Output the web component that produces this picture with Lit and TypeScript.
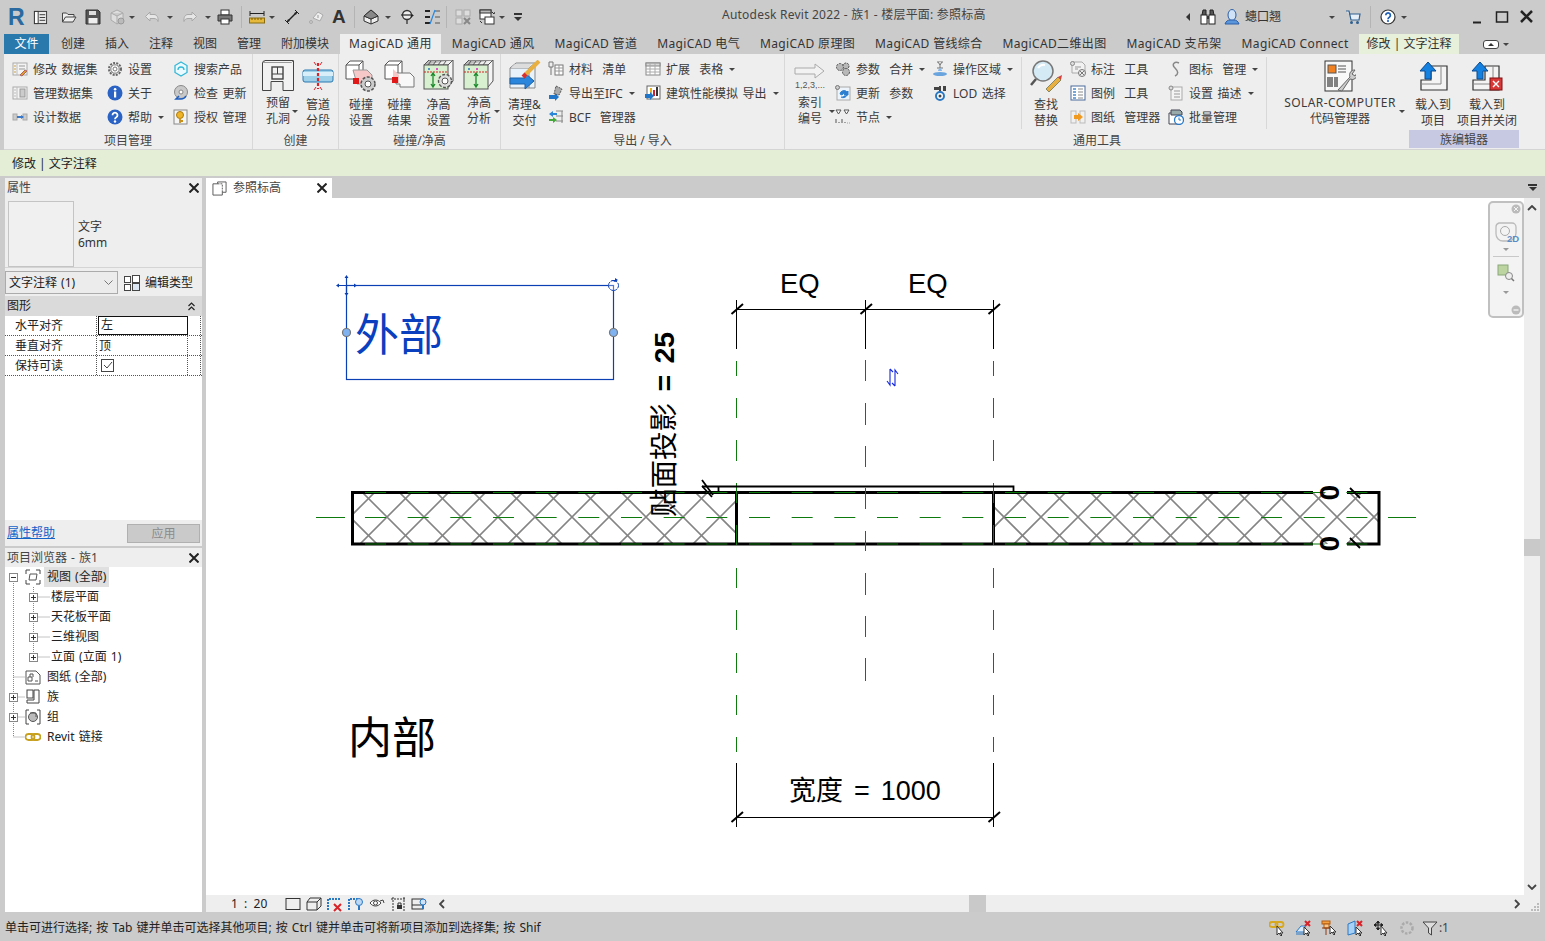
import { LitElement, css, html, svg, SVGTemplateResult } from 'lit';
import { customElement } from 'lit/decorators.js';

const G = { red: '#d8232a' };

// 16px icons, used in the quick access bar, small ribbon rows and the tree
const I16: Record<string, SVGTemplateResult> = {
  doc: svg`<rect x="1.500" y="1.500" width="13" height="13" fill="#e8e8e8" stroke="#333"/><rect x="1.500" y="1.500" width="4" height="13" fill="#fff" stroke="#333"/><path d="M7 5h6M7 8h6M7 11h6" stroke="#333"/>`,
  open: svg`<path d="M1.500 13V4h4l1.500 1.500h6V8M1.500 13l3-5h10.500l-3 5z" fill="#eee" stroke="#444"/>`,
  save: svg`<path d="M1 1h12l2 2v12H1z" fill="#555" stroke="#333"/><rect x="4" y="2" width="7" height="4" fill="#ddd"/><rect x="3.500" y="9" width="9" height="5.500" fill="#eee"/>`,
  cubeg: svg`<path d="M2 4l6-3 6 3v7l-6 4-6-4zM2 4l6 3 6-3M8 7v8" fill="#ddd" stroke="#aaa"/><circle cx="12" cy="12" r="3" fill="#bbb" stroke="#999"/>`,
  undo: svg`<path d="M6 3L1.500 7.500 6 12V9.500h4c2 0 3.500 1 4 3 .5-4-1-7-4-7H6z" fill="#e6e6e6" stroke="#a8a8a8"/>`,
  redo: svg`<path d="M10 3l4.500 4.500L10 12V9.500H6c-2 0-3.500 1-4 3-.5-4 1-7 4-7h4z" fill="#e6e6e6" stroke="#a8a8a8"/>`,
  print: svg`<rect x="4" y="1" width="8" height="5" fill="#fff" stroke="#333"/><path d="M1 6h14v6H1z" fill="#777" stroke="#333"/><rect x="4" y="10" width="8" height="5" fill="#fff" stroke="#333"/>`,
  measure: svg`<path d="M1 4.500h14M1 2v5M15 2v5" stroke="#222" fill="none"/><rect x="0.500" y="9" width="15" height="5" fill="#e6b93c" stroke="#8a6d10"/><path d="M3 9v2M6 9v2M9 9v2M12 9v2" stroke="#7a5c00"/>`,
  aligned: svg`<path d="M3 13L13 3" stroke="#222" stroke-width="1.400"/><path d="M1 11l4 4M11 1l4 4" stroke="#222"/><path d="M3 13l1-3 2 2zM13 3l-1 3-2-2z" fill="#222"/>`,
  tagg: svg`<path d="M5 9l5-6 5 3-3 6z" fill="#eee" stroke="#aaa"/><circle cx="3" cy="13" r="1.500" fill="none" stroke="#aaa"/><path d="M10 6v3" stroke="#999"/>`,
  home: svg`<path d="M1 7l7-6 7 6v5l-7 3-7-3z" fill="#eee" stroke="#333"/><path d="M1 7l7 3 7-3M8 10v5" stroke="#333" fill="none"/><path d="M1 7l7-6 7 6-7 3z" fill="#888" stroke="#333"/>`,
  section: svg`<circle cx="7" cy="6" r="4.500" fill="#eee" stroke="#333" stroke-width="1.300"/><path d="M1 6h12" stroke="#333" stroke-width="1.300"/><path d="M7 11v4" stroke="#333" stroke-width="1.300"/><path d="M11 6l3 0-3 3z" fill="#222"/>`,
  thin: svg`<path d="M1 2h5M1 8h5M1 14h5" stroke="#222" stroke-width="2"/><path d="M11 2h5M11 8h5M11 14h5" stroke="#555"/><path d="M11 1L6 15" stroke="#2a88e0" stroke-width="1.200"/>`,
  closeg: svg`<rect x="1" y="1" width="6" height="6" fill="#ddd" stroke="#aaa"/><rect x="9" y="1" width="6" height="6" fill="#ddd" stroke="#aaa"/><rect x="1" y="9" width="6" height="6" fill="#ddd" stroke="#aaa"/><path d="M9 9l6 6M15 9l-6 6" stroke="#888" stroke-width="2"/>`,
  switchw: svg`<rect x="1" y="1" width="11" height="9" fill="#fff" stroke="#333"/><rect x="1" y="1" width="11" height="3" fill="#bbb" stroke="#333"/><rect x="6" y="8" width="9" height="7" fill="#fff" stroke="#333"/><path d="M13 3l2 2 1-2M1 12l2 2" stroke="#333" fill="none"/>`,
  dsEdit: svg`<rect x="1" y="2" width="14" height="12" fill="#f4f4f4" stroke="#aaa"/><path d="M5 2v12" stroke="#bbb"/><path d="M2 5h2M2 8h2M2 11h2" stroke="#c8a040"/><path d="M7 5h6M7 8h6" stroke="#999"/><path d="M8 14l5-5 2 1-5 5z" fill="#e69a2a" stroke="#a66"/>`,
  ds: svg`<rect x="1" y="2" width="14" height="12" fill="#f4f4f4" stroke="#aaa"/><path d="M5 2v12" stroke="#bbb"/><rect x="8" y="4" width="5" height="8" fill="#ccc" stroke="#999"/><path d="M2 5h2M2 8h2M2 11h2" stroke="#bbb"/>`,
  design: svg`<rect x="1" y="5" width="4" height="6" fill="#ccc" stroke="#aaa"/><rect x="11" y="5" width="4" height="6" fill="#ccc" stroke="#aaa"/><path d="M5 8h6" stroke="#3a78c8" stroke-width="2"/><path d="M9 6l3 2-3 2z" fill="#3a78c8"/>`,
  gear: svg`<circle cx="8" cy="8" r="6" fill="none" stroke="#666" stroke-width="2" stroke-dasharray="2 1.200"/><circle cx="8" cy="8" r="4.200" fill="#fff" stroke="#777"/><circle cx="8" cy="8" r="2" fill="#fff" stroke="#777"/>`,
  hex: svg`<path d="M8 1l6 3.500v7L8 15l-6-3.500v-7z" fill="#eafaff" stroke="#35b7d6" stroke-width="1.300"/><path d="M5 9a3 3 0 0 1 6 0" fill="none" stroke="#35b7d6" stroke-width="1.300"/>`,
  info: svg`<circle cx="8" cy="8" r="7.500" fill="#2b63c4"/><rect x="7" y="6.500" width="2.200" height="6" fill="#fff"/><circle cx="8.100" cy="4.200" r="1.300" fill="#fff"/>`,
  help: svg`<circle cx="8" cy="8" r="7.500" fill="#2b63c4"/><path d="M5.500 6.200a2.500 2.500 0 1 1 3.800 2.100c-.9.5-1.300 1-1.300 2" fill="none" stroke="#fff" stroke-width="1.800"/><circle cx="8" cy="12.500" r="1.200" fill="#fff"/>`,
  disc: svg`<circle cx="8" cy="7" r="6.500" fill="#c9c9c9" stroke="#888"/><circle cx="8" cy="7" r="2" fill="#fff" stroke="#888"/><path d="M6 11l-3 3h5M8 14c2 0 4-1 5-3" stroke="#1f5fc0" stroke-width="1.600" fill="none"/>`,
  key: svg`<rect x="1" y="1" width="13" height="14" fill="#f5f5f5" stroke="#888"/><circle cx="7" cy="6" r="3.500" fill="#f0b428" stroke="#a87a10"/><path d="M7 9v5M7 12h3" stroke="#c8901a" stroke-width="1.800"/>`,
  material: svg`<path d="M1 1h4v5H1zM3 6v8" fill="none" stroke="#777"/><rect x="7" y="4" width="8" height="10" fill="#fff" stroke="#777"/><path d="M7 7h8M7 10h8M11 4v10" stroke="#999"/>`,
  table: svg`<rect x="1" y="2" width="14" height="12" fill="#fff" stroke="#888"/><rect x="1" y="2" width="14" height="3" fill="#d8d8d8" stroke="#888"/><path d="M1 8h14M1 11h14M5 2v12M10 2v12" stroke="#aaa"/>`,
  ifc: svg`<path d="M8 1l6 3-3 6-5-1z" fill="#aaa" stroke="#555" stroke-dasharray="2 1"/><path d="M1 10h6V8l4 4-4 4v-2H1z" fill="#1f76c8"/>`,
  energy: svg`<rect x="2" y="1" width="13" height="13" fill="#fff" stroke="#666"/><rect x="5" y="3" width="2" height="8" fill="#e6b020"/><rect x="8" y="5" width="2" height="6" fill="#c23"/><rect x="11" y="2" width="2" height="9" fill="#333"/><path d="M0 9h5V7l4 4-4 4v-2H0z" fill="#1f76c8"/>`,
  bcf: svg`<path d="M8 2h7M8 7h7M8 12h7M14 2v12" stroke="#888" fill="none"/><path d="M1 5l4-3v2h4v2H5v2z" fill="#2a86d8"/><path d="M9 11l-4-3v2H1v2h4v2z" fill="#45a83c"/>`,
  params: svg`<circle cx="5" cy="6" r="3.500" fill="#b8b8b8" stroke="#555" stroke-dasharray="2 1"/><circle cx="11" cy="5" r="3" fill="#b8b8b8" stroke="#555" stroke-dasharray="2 1"/><circle cx="11" cy="11" r="3.500" fill="#b8b8b8" stroke="#555" stroke-dasharray="2 1"/>`,
  updParam: svg`<rect x="2" y="2" width="13" height="13" fill="#eef4fb" stroke="#aaa"/><circle cx="2.500" cy="2.500" r="2" fill="#ccc" stroke="#777"/><path d="M5 9a4 4 0 0 1 7-2l1-1v4H9l1-1a2 2 0 0 0-3 1zM12 10a4 4 0 0 1-6 2" fill="#2c7fd0" stroke="#2c7fd0"/>`,
  nodes: svg`<path d="M1 1h5L3.500 5zM9 1h5l-2.500 4z" fill="#fff" stroke="#555"/><path d="M1 10v4M4 13v1M7 10v4M10 13v1M12.500 14h.5M14.500 14h.5" stroke="#555"/>`,
  opArea: svg`<path d="M5 1h6M5 7h6M8 1v6" stroke="#777"/><path d="M6 1l2 3 2-3" fill="#ddd" stroke="#777"/><path d="M8 7c-1 0-2 2-2 3h4c0-1-1-3-2-3z" fill="#88b8e8"/><ellipse cx="8" cy="13" rx="7" ry="2" fill="#6aa4de"/>`,
  lod: svg`<path d="M8 7V1" stroke="#444" stroke-width="2"/><rect x="2" y="2" width="5" height="3" fill="#444"/><rect x="11" y="1" width="3" height="5" fill="#444"/><circle cx="8" cy="11" r="4" fill="#fff" stroke="#2a78c4" stroke-width="2"/><circle cx="8" cy="11" r="1.500" fill="#444"/>`,
  tagTool: svg`<path d="M2 1h10l3 3v8H2z" fill="#f2f2f2" stroke="#aaa"/><circle cx="2.500" cy="2.500" r="2" fill="#ddd" stroke="#888"/><path d="M5 6h6M5 8h3" stroke="#999"/><circle cx="12" cy="12" r="3.500" fill="#eee" stroke="#777"/><path d="M10 10l4 4M14 10l-4 4" stroke="#777"/>`,
  legend: svg`<rect x="1" y="1" width="14" height="14" fill="#fff" stroke="#4a6a9a"/><path d="M3 4h3M3 7h3M3 10h3M3 13h3" stroke="#4a8ad0" stroke-width="1.400"/><path d="M8 4h5M8 7h5M8 10h5M8 13h5" stroke="#888"/>`,
  sheets: svg`<rect x="1" y="2" width="5" height="12" fill="#f0f0f0" stroke="#bbb"/><rect x="10" y="2" width="5" height="12" fill="#f0f0f0" stroke="#bbb"/><path d="M4 6h4V4l5 4-5 4v-2H4z" fill="#f09a20"/>`,
  iconS: svg`<path d="M11 2C7 0 3 3 7 7c3 3 4 6 0 8" fill="none" stroke="#888" stroke-width="1.500"/>`,
  desc: svg`<rect x="3" y="2" width="11" height="13" fill="#f4f4f4" stroke="#aaa"/><circle cx="3" cy="3" r="2" fill="#ddd" stroke="#888"/><path d="M6 6h6M6 9h6M6 12h6" stroke="#999"/>`,
  batch: svg`<path d="M1 4h11v11H1z" fill="#fff" stroke="#445"/><path d="M3 1h9l2 2v3H3z" fill="#9aa" stroke="#445"/><circle cx="11" cy="11" r="4.500" fill="#fff" stroke="#2a7ac8" stroke-width="1.300"/><path d="M11 8.500V11h2" stroke="#2a7ac8" fill="none"/>`,
  views: svg`<path d="M1 5V1h4M11 1h4v4M15 11v4h-4M5 15H1v-4" fill="none" stroke="#444"/><path d="M4 11l1-6h7l-1 6z" fill="#fff" stroke="#555"/>`,
  sheet: svg`<path d="M1 2h10l4 4v9H1z" fill="#fff" stroke="#555"/><path d="M3 12V8h4v4zM5 8V5h3v3M10 12h3" fill="none" stroke="#555"/>`,
  family: svg`<rect x="2" y="1" width="6" height="8" fill="#fff" stroke="#444"/><path d="M9 1h5v13H2v-3h7z" fill="#fff" stroke="#444"/>`,
  group: svg`<path d="M4 1H1v14h3M12 1h3v14h-3" fill="none" stroke="#444"/><circle cx="8" cy="8" r="4.500" fill="#bbb" stroke="#555"/><path d="M5 4h6v4" fill="none" stroke="#555"/>`,
  link: svg`<rect x="0.500" y="5" width="9" height="6" rx="3" fill="none" stroke="#c8a020" stroke-width="1.800"/><rect x="6.500" y="5" width="9" height="6" rx="3" fill="none" stroke="#c8a020" stroke-width="1.800"/>`,
  tabView: svg`<path d="M1 3h5V1h9v11h-4v3H1z" fill="#fff" stroke="#555"/><path d="M6 3h5v9" fill="none" stroke="#555" stroke-dasharray="2 1"/>`,
  binoc: svg`<path d="M2 6l1-5h3v5M14 6l-1-5h-3v5" fill="#555" stroke="#222"/><rect x="1" y="6" width="6" height="9" fill="#fff" stroke="#222"/><rect x="9" y="6" width="6" height="9" fill="#fff" stroke="#222"/><path d="M7 7h2v3H7z" fill="#333"/>`,
  user: svg`<ellipse cx="8" cy="6" rx="4" ry="5.500" fill="#cfe2f8" stroke="#2c5fa8"/><path d="M1 15c1-3 3-4 5-4h4c2 0 4 1 5 4z" fill="#5a96dc" stroke="#2c5fa8"/>`,
  cart: svg`<path d="M1 2h3l2 9h8l1-6H4" fill="#e6eef7" stroke="#30608f" stroke-width="1.200"/><circle cx="6.500" cy="13.500" r="1.500" fill="#30608f"/><circle cx="12.500" cy="13.500" r="1.500" fill="#30608f"/>`,
  helpO: svg`<circle cx="8" cy="8" r="7" fill="#fff" stroke="#333" stroke-width="1.200"/><path d="M5.800 6.200a2.300 2.300 0 1 1 3.500 2c-.9.500-1.300 1-1.300 2" fill="none" stroke="#1f5fb8" stroke-width="1.700"/><circle cx="8" cy="12" r="1.100" fill="#1f5fb8"/>`,
  vFrame: svg`<rect x="1" y="2.500" width="14" height="11" fill="#eee" stroke="#333"/>`,
  vCube: svg`<path d="M1 6h10v8H1zM1 6l3-4h11l-4 4M15 2v8l-4 4" fill="#eee" stroke="#333"/>`,
  vHideX: svg`<path d="M1 14V3h12" fill="none" stroke="#2a78c4" stroke-width="2" stroke-dasharray="2 1"/><path d="M7 8l7 7M14 8l-7 7" stroke="${G.red}" stroke-width="2"/>`,
  vBulb: svg`<path d="M1 14V3h10" fill="none" stroke="#2a78c4" stroke-width="2" stroke-dasharray="2 1"/><circle cx="11" cy="6" r="3.500" fill="#bcd8f4" stroke="#2a78c4"/><path d="M10 10h2v4h-2z" fill="#2a78c4"/>`,
  vEye: svg`<path d="M1 7c3-4 8-4 11 0-3 4-8 4-11 0z" fill="#fff" stroke="#444"/><circle cx="6.500" cy="7" r="2" fill="#fff" stroke="#444"/><path d="M11 5l3-1 1 3" fill="none" stroke="#444"/>`,
  vCrop: svg`<path d="M3 1v14M14 1v14M1 3h15" stroke="#333" stroke-dasharray="2 1" fill="none"/><rect x="7" y="9" width="5" height="4" fill="#333"/><path d="M8 9V7h3v2" fill="none" stroke="#333"/>`,
  vTemp: svg`<rect x="1" y="3" width="11" height="10" fill="#eee" stroke="#333"/><path d="M1 9h11" stroke="#333"/><circle cx="12" cy="6" r="3" fill="#cfe2f8" stroke="#2a78c4"/><path d="M11 9h2v4h-2z" fill="#2a78c4"/>`,
  sLink: svg`<rect x="0.500" y="2" width="8" height="5" rx="2.500" fill="none" stroke="#d8a81c" stroke-width="1.800"/><rect x="6.500" y="2" width="8" height="5" rx="2.500" fill="none" stroke="#d8a81c" stroke-width="1.800"/><path d="M8 6v9l2-2 2 3 1-1-2-2h3z" fill="#fff" stroke="#333"/>`,
  sUnder: svg`<path d="M1 12l5-6h4v6zM1 14h8" fill="#dbeafa" stroke="#2a78c4"/><path d="M10 1l5 5M15 1l-5 5" stroke="${G.red}" stroke-width="2"/><path d="M9 7v8l2-2 2 3 1-1-2-2h3z" fill="#fff" stroke="#333"/>`,
  sPin: svg`<rect x="1" y="1" width="8" height="3" fill="#f5a040" stroke="#b05a10"/><rect x="3" y="4" width="5" height="4" fill="#f7c890" stroke="#b05a10"/><path d="M1 8h9M5 8v7" stroke="#8a3a10"/><path d="M9 6v8l2-2 2 3 1-1-2-2h3z" fill="#fff" stroke="#333"/>`,
  sFace: svg`<path d="M1 4l7-3v12l-7 2z" fill="#a8d0f4" stroke="#2a78c4"/><path d="M10 1l5 5M15 1l-5 5" stroke="${G.red}" stroke-width="2"/><path d="M9 7v8l2-2 2 3 1-1-2-2h3z" fill="#fff" stroke="#333"/>`,
  sDrag: svg`<path d="M5 1v9M1 5h9M5 1L3.500 3h3zM5 10L3.500 8h3zM1 5l2-1.500v3zM10 5L8 3.500v3z" fill="#222" stroke="#222"/><path d="M8 6v9l2-2 2 3 1-1-2-2h3z" fill="#fff" stroke="#333"/>`,
  sCog: svg`<circle cx="8" cy="8" r="5.500" fill="none" stroke="#aaa" stroke-width="2.500" stroke-dasharray="2.500 1.500"/>`,
  sFilter: svg`<path d="M1 2h14L9.500 8v7l-3-2V8z" fill="#ddd" stroke="#444"/>`,
};

// 32px ribbon icons
const I32: Record<string, SVGTemplateResult> = {
  opening: svg`<path d="M0.500 2l2-1.500h29v30H21v-9H9v9H0.500z" fill="#f2f2f2" stroke="#444"/><path d="M2.500 0.500v2M31.500 0.500l-2 2H.5" fill="none" stroke="#999"/><rect x="10" y="7" width="11" height="12" fill="none" stroke="#444" stroke-width="1.400"/><path d="M10 14h11M15.500 7v7" stroke="#444"/>`,
  pipe: svg`<rect x="1" y="10" width="30" height="12" rx="2" fill="#9fd0ea" stroke="#2a78b0"/><rect x="1" y="12" width="30" height="4" fill="#d8eef8"/><path d="M16 3v26" stroke="${G.red}" stroke-width="2.200" stroke-dasharray="3 2"/><path d="M12 2l2 3M20 2l-2 3M12 30l2-3M20 30l-2-3" stroke="${G.red}"/>`,
  collSet: svg`<path d="M1 5l4-4h13v14l-4 4H1z" fill="#fff" stroke="#555"/><path d="M14 5v14M1 5h13l4-4" fill="none" stroke="#555"/><path d="M8 10h14l5 5v9H12z" fill="#f7c8c8" stroke="#999"/><rect x="8" y="18" width="6" height="6" fill="#e01818"/><circle cx="23" cy="24" r="7" fill="#ccc" stroke="#555" stroke-width="1.500" stroke-dasharray="3 1.500"/><circle cx="23" cy="24" r="3" fill="#fff" stroke="#555"/>`,
  collRes: svg`<path d="M1 5l4-4h13v14l-4 4H1z" fill="#fff" stroke="#555"/><path d="M14 5v14M1 5h13l4-4" fill="none" stroke="#555"/><path d="M12 13h14l4 4v10H16v-3h-4z" fill="#f8f8f8" stroke="#777"/><path d="M9 9l6 6v8H9z" fill="#f7c8c8"/><rect x="8" y="17" width="6" height="6" fill="#e01818"/>`,
  clearSet: svg`<path d="M1 5h24l5-5v21l-5 6" fill="#f4f4f4" stroke="#555"/><path d="M1 5l5-5h24" fill="#bbb" stroke="#555"/><path d="M8 1l-3 4M13 1l-3 4M18 1l-3 4M23 1l-3 4" stroke="#555"/><rect x="1" y="5" width="24" height="24" fill="#d8f0d0" stroke="#555"/><path d="M1 12h24" stroke="#d82020" stroke-dasharray="2 1"/><circle cx="6" cy="9" r="1" fill="#2a78c4"/><circle cx="14" cy="9" r="1" fill="#e020c0"/><path d="M10 14v12M8 16l2-3 2 3M8 24l2 3 2-3" stroke="#1a8a2a" fill="none" stroke-width="1.300"/><circle cx="22" cy="21" r="6.500" fill="#ddd" stroke="#555" stroke-dasharray="3 1.500" stroke-width="1.400"/><circle cx="22" cy="21" r="3" fill="#fff" stroke="#555"/>`,
  clearAna: svg`<path d="M1 5h24l5-5v21l-5 6" fill="#f4f4f4" stroke="#555"/><path d="M1 5l5-5h24" fill="#bbb" stroke="#555"/><path d="M8 1l-3 4M13 1l-3 4M18 1l-3 4M23 1l-3 4" stroke="#555"/><rect x="1" y="5" width="24" height="24" fill="#d8f0d0" stroke="#555"/><path d="M1 12h24" stroke="#d82020" stroke-dasharray="2 1"/><circle cx="6" cy="9" r="1" fill="#2a78c4"/><circle cx="14" cy="9" r="1" fill="#e020c0"/><path d="M13 14v12M11 16l2-3 2 3M11 24l2 3 2-3" stroke="#1a8a2a" fill="none" stroke-width="1.300"/>`,
  clean: svg`<path d="M1 8l6-5h19v25H1z" fill="#e8f2fa" stroke="#888"/><path d="M1 8h19l6-5M20 8v20" fill="none" stroke="#888"/><path d="M6 4h16L20 8H2z" fill="#ddd"/><path d="M1 18h15v-5l9 8-9 8v-5H1z" fill="#2a86dc" stroke="#1a60a8"/><path d="M16 15L30 1" stroke="#e8b040" stroke-width="4"/><path d="M14 17l3-3" stroke="#d83030" stroke-width="4"/>`,
  index: svg`<path d="M1 8h20V4l9 7-9 7v-4H1z" fill="#f2f2f2" stroke="#aaa"/><text x="1" y="28" font-size="9" font-family="Liberation Sans" fill="#555">1,2,3,...</text>`,
  find: svg`<circle cx="13" cy="11" r="10" fill="#d4eaf5" stroke="#777" stroke-width="1.500"/><path d="M8 8a7 7 0 0 1 7-3" stroke="#fff" stroke-width="2" fill="none"/><path d="M6 19L1 25" stroke="#555" stroke-width="2.500"/><path d="M16 29l12-12 3 3-12 12z" fill="#e8b040" stroke="#886"/><path d="M28 17l3 3 1-5z" fill="#d84040"/>`,
  solar: svg`<rect x="1" y="1" width="27" height="30" fill="#f8f8f8" stroke="#333"/><rect x="4" y="5" width="8" height="8" fill="#f08020" stroke="#555"/><path d="M14 6h8M14 9h8M14 12h8" stroke="#555"/><path d="M4 17v10M6 17v10M8 17v10M11 17v10M13 17v10" stroke="#333" stroke-width="1.200"/><path d="M14 30L26 17a5 5 0 0 1 5-7l-3 4 3 2 2-3a5 5 0 0 1-7 6L18 31z" fill="#ccc" stroke="#666"/>`,
  load: svg`<path d="M14 6h16v24H4V20h10z" fill="#f4f4f4" stroke="#333" stroke-width="1.200"/><path d="M24 6v18H4" fill="none" stroke="#888"/><path d="M3 11L11 2l8 9h-5v8H8v-8z" fill="#1480e0" stroke="#0a4a90"/>`,
  loadClose: svg`<path d="M14 6h14v24H2V20h12z" fill="#f4f4f4" stroke="#333" stroke-width="1.200"/><path d="M22 6v18H2" fill="none" stroke="#888"/><path d="M1 11L9 2l8 9h-5v8H6v-8z" fill="#1480e0" stroke="#0a4a90"/><rect x="19" y="18" width="12" height="12" fill="#d83838" stroke="#801010"/><path d="M22 21l6 6M28 21l-6 6" stroke="#fff" stroke-width="1.400"/>`,
};

const icon = (n: string, s = 16) => html`<svg class="ico" width=${s} height=${s} viewBox="0 0 16 16">${I16[n]}</svg>`;
const big = (n: string, s = 32) => html`<svg class="ico" width=${s} height=${s} viewBox="0 0 32 32">${I32[n]}</svg>`;
const caret = html`<i class="caret"></i>`;

type Small = [string, string, boolean?];
const small = (items: Small[]) => html`<div class="col">
  ${items.map(([ic, label, drop]) => html`<div class="sm">${icon(ic)}<span>${label}</span>${drop ? caret : ''}</div>`)}
</div>`;
const large = (ic: string, l1: string, l2: string, drop = false) => html`<div class="lg ${drop ? 'drop' : ''}">
  <div class="lgicon">${big(ic)}</div>
  <div class="lgtext">${l1}<br />${l2}</div>
  ${drop ? html`<i class="caret"></i>` : ''}
</div>`;

const TABS = ['创建', '插入', '注释', '视图', '管理', '附加模块', 'MagiCAD 通用', 'MagiCAD 通风', 'MagiCAD 管道', 'MagiCAD 电气', 'MagiCAD 原理图', 'MagiCAD 管线综合', 'MagiCAD二维出图', 'MagiCAD 支吊架', 'MagiCAD Connect', '修改 | 文字注释'];

@customElement('revit-ribbon')
export class RevitRibbon extends LitElement {
  static styles = css`
    :host { display: block; font: 12px/16px "Noto Sans", "Noto Sans CJK SC", sans-serif; color: #3a3a3a; }
    .ico { display: block; flex: none; }
    .caret { display: inline-block; width: 0; height: 0; border: 3px solid transparent; border-top: 3px solid #444; border-bottom: 0; margin-left: 6px; flex: none; }

    .qa { height: 34px; background: #cbcbcb; display: flex; align-items: center; }
    .qaleft { width: 722px; display: flex; align-items: center; flex: none; }
    .logo { width: 25px; margin-left: 8px; flex: none; font: 700 23px/24px "Liberation Sans", sans-serif; color: #2a6aa0; }
    .biga { width: 14px; flex: none; font: 700 19px/20px "Liberation Sans", sans-serif; color: #333; margin-right: 8px; }
    .q { margin-right: 8px; }
    .q.a { margin-right: 4px; }
    .q.a3 { margin-right: 7px; }
    .q.open { margin-left: 5px; }
    .q.print { margin-left: -3px; }
    .q.tight { margin-right: 6px; }
    .qa .caret { margin: 0 9px 0 0; }
    .qa .caret.c2 { margin-left: 2px; }
    .bar { width: 1px; height: 22px; background: #b4b4b4; margin-right: 8px; flex: none; }
    .bar.b7 { margin-right: 7px; }
    .cust { display: flex; flex-direction: column; align-items: center; gap: 2px; width: 8px; }
    .cust b { display: block; width: 8px; height: 2px; background: #333; }
    .cust i { display: block; width: 0; height: 0; border: 4px solid transparent; border-top: 4px solid #333; border-bottom: 0; }
    .title { width: 464px; flex: none; color: #444; margin-top: -4px; letter-spacing: 0.22px; }
    .qaright { display: flex; align-items: center; flex: 1; }
    .tri-left { width: 0; height: 0; border: 4px solid transparent; border-right: 4px solid #333; border-left: 0; margin-right: 10px; }
    .gap8 { width: 8px; flex: none; }
    .uname { width: 84px; margin-left: 5px; color: #333; flex: none; }
    .qa .qaright .caret.ur { margin: 0 10px 0 0; }
    .qa .qaright .bar { margin: 0 9px; }
    .qa .qaright .caret.hp { margin: 0 0 0 5px; }
    .winbtn { flex: none; margin-left: 66px; }

    .tabs { height: 20px; background: #cbcbcb; display: flex; align-items: stretch; line-height: 20px; padding-left: 4px; white-space: nowrap; }
    .tab { padding: 0 10px; color: #333; }
    .tab.lat { letter-spacing: 0.35px; }
    .tab.file { width: 45px; box-sizing: border-box; padding: 0; text-align: center; background: #2a79ad; color: #fff; margin-right: 2px; }
    .tab.on { background: #eeeeee; padding: 0 9px; margin: 0 1px; }
    .tab.ctx { background: #e6f0da; padding: 0 8px; margin-left: 0; }
    .collapse { margin-left: 24px; display: flex; align-items: center; gap: 4px; }
    .collapse b { display: flex; align-items: center; justify-content: center; width: 14px; height: 7px; border: 1px solid #444; border-radius: 3px; background: #fff; }
    .collapse b::after { content: ""; width: 0; height: 0; border: 3px solid transparent; border-bottom: 3px solid #333; border-top: 0; }
    .collapse .caret { margin: 0; }

    .ribbon { height: 95px; background: #eeeeee; margin-left: 4px; display: flex; border-bottom: 1px solid #d4d4d4; }
    .panel { display: flex; flex-direction: column; flex: none; box-sizing: border-box; border-right: 1px solid #d8d8d8; }
    .panel.last { border-right: 0; }
    .body { display: grid; height: 75px; margin-top: 3px; }
    .plabel { height: 17px; line-height: 18px; text-align: center; color: #444; }
    .p1 { width: 249px; } .p1 .body { padding-left: 8px; grid-template-columns: 95px 66px 80px; }
    .p2 { width: 86px; } .p2 .body { padding-left: 5px; grid-template-columns: 40px 40px; }
    .p3 { width: 162px; } .p3 .body { padding-left: 3px; grid-template-columns: 38px 39px 39px 42px; }
    .p4 { width: 284px; } .p4 .body { grid-template-columns: 47px 97px 140px; }
    .p5 { width: 624px; border-right: 0; } .p5 .body { grid-template-columns: 50px 97px 90px 48px 98px 99px 142px; }
    .p6 { width: 110px; border-right: 0; } .p6 .body { grid-template-columns: 48px 60px; }
    .p6 .plabel { background: #c7c9e2; height: 18px; margin-top: -2px; line-height: 19px; }
    .sepr { border-right: 1px solid #d8d8d8; height: 72px; }
    .col { display: flex; flex-direction: column; min-width: 0; }
    .sm { height: 24px; display: flex; align-items: center; gap: 5px; white-space: pre; word-spacing: 1.500px; }
    .sm span { padding-top: 2px; }
    .sm .caret { margin-left: 1px; }
    .lg { display: flex; flex-direction: column; align-items: center; position: relative; white-space: nowrap; }
    .lgicon { height: 37px; padding-top: 3px; display: flex; align-items: flex-start; }
    .lgtext { text-align: center; line-height: 16px; }
    .lg.drop .lgtext { margin-top: -2px; line-height: 15.500px; }
    .lg.drop > .caret { position: absolute; right: 0; top: 53px; margin: 0; }
    .lg.solar { padding-left: 4px; }
    .lg.solar > .caret { right: 4px; }
    .wide { letter-spacing: 0.42px; }

    .ctxbar { height: 26px; box-sizing: border-box; background: #e4eed6; line-height: 25px; padding: 1px 0 0 12px; color: #222; }
  `;

  render() {
    return html`
      <div class="qa">
        <div class="qaleft">
          <span class="logo">R</span>
          <span class="q">${icon('doc', 15)}</span>
          <span class="q open">${icon('open')}</span>
          <span class="q">${icon('save')}</span>
          <span class="q a">${icon('cubeg')}</span>${caret}
          <span class="q a3">${icon('undo')}</span>${caret}
          <span class="q a3">${icon('redo')}</span>${caret}
          <span class="q print">${icon('print')}</span>
          <i class="bar b7"></i>
          <span class="q a">${icon('measure')}</span>${caret}
          <span class="q">${icon('aligned')}</span>
          <span class="q">${icon('tagg')}</span>
          <span class="biga">A</span>
          <i class="bar"></i>
          <span class="q a">${icon('home')}</span><i class="caret c2"></i>
          <span class="q">${icon('section')}</span>
          <span class="q tight">${icon('thin')}</span>
          <i class="bar"></i>
          <span class="q">${icon('closeg')}</span>
          <span class="q a">${icon('switchw')}</span>${caret}
          <span class="cust"><b></b><i></i></span>
        </div>
        <div class="title">Autodesk Revit 2022 - 族1 - 楼层平面: 参照标高</div>
        <div class="qaright">
          <i class="tri-left"></i>
          ${icon('binoc')}<i class="gap8"></i>${icon('user')}
          <span class="uname">蟪囗翘</span>
          <i class="caret ur"></i>
          ${icon('cart')}
          <i class="bar"></i>
          ${icon('helpO')}
          <i class="caret hp"></i>
          <svg class="winbtn" width="62" height="16" viewBox="0 0 62 16">
            <path d="M0 13.500h8" stroke="#222" stroke-width="2"/>
            <rect x="23.500" y="3" width="11" height="10" fill="none" stroke="#222" stroke-width="1.500"/>
            <path d="M48 2l11 11M59 2L48 13" stroke="#222" stroke-width="2.500"/>
          </svg>
        </div>
      </div>

      <div class="tabs">
        <div class="tab file">文件</div>
        ${TABS.map((t) => html`<div class="tab ${t === 'MagiCAD 通用' ? 'on' : ''} ${t.startsWith('修改') ? 'ctx' : ''} ${t.startsWith('MagiCAD') ? 'lat' : ''}">${t}</div>`)}
        <div class="collapse"><b></b>${caret}</div>
      </div>

      <div class="ribbon">
        <div class="panel p1">
          <div class="body">
            ${small([['dsEdit', '修改 数据集'], ['ds', '管理数据集'], ['design', '设计数据']])}
            ${small([['gear', '设置'], ['info', '关于'], ['help', '帮助', true]])}
            ${small([['hex', '搜索产品'], ['disc', '检查 更新'], ['key', '授权 管理']])}
          </div>
          <div class="plabel">项目管理</div>
        </div>
        <div class="panel p2">
          <div class="body">${large('opening', '预留', '孔洞', true)}${large('pipe', '管道', '分段')}</div>
          <div class="plabel">创建</div>
        </div>
        <div class="panel p3">
          <div class="body">
            ${large('collSet', '碰撞', '设置')}${large('collRes', '碰撞', '结果')}
            ${large('clearSet', '净高', '设置')}${large('clearAna', '净高', '分析', true)}
          </div>
          <div class="plabel">碰撞/净高</div>
        </div>
        <div class="panel p4">
          <div class="body">
            ${large('clean', '清理&', '交付')}
            ${small([['material', '材料  清单'], ['ifc', '导出至IFC', true], ['bcf', 'BCF  管理器']])}
            ${small([['table', '扩展  表格', true], ['energy', '建筑性能模拟 导出', true]])}
          </div>
          <div class="plabel">导出 / 导入</div>
        </div>
        <div class="panel p5">
          <div class="body">
            ${large('index', '索引', '编号', true)}
            ${small([['params', '参数  合并', true], ['updParam', '更新  参数'], ['nodes', '节点', true]])}
            <div class="sepr">${small([['opArea', '操作区域', true], ['lod', 'LOD 选择']])}</div>
            ${large('find', '查找', '替换')}
            ${small([['tagTool', '标注  工具'], ['legend', '图例  工具'], ['sheets', '图纸  管理器']])}
            <div class="sepr">${small([['iconS', '图标  管理', true], ['desc', '设置 描述', true], ['batch', '批量管理']])}</div>
            <div class="lg drop solar">
              <div class="lgicon">${big('solar')}</div>
              <div class="lgtext"><span class="wide">SOLAR-COMPUTER</span><br />代码管理器</div>
              <i class="caret"></i>
            </div>
          </div>
          <div class="plabel">通用工具</div>
        </div>
        <div class="panel p6 last">
          <div class="body">${large('load', '载入到', '项目')}${large('loadClose', '载入到', '项目并关闭')}</div>
          <div class="plabel">族编辑器</div>
        </div>
      </div>
      <div class="ctxbar">修改 | 文字注释</div>
    `;
  }
}

@customElement('revit-side')
export class RevitSide extends LitElement {
  static styles = css`
    :host { display: flex; flex-direction: column; gap: 2px; width: 197px; flex: none; margin-left: 5px; font: 12px/16px "Noto Sans", "Noto Sans CJK SC", sans-serif; color: #222; word-spacing: 1px; }
    .ico { display: block; flex: none; }
    .x { display: block; flex: none; }
    .props { height: 368px; background: #eeeeee; display: flex; flex-direction: column; }
    .head { height: 20px; display: flex; align-items: center; justify-content: space-between; padding: 0 3px 0 2px; color: #444; flex: none; }
    .type { height: 70px; display: flex; gap: 4px; padding: 3px 0 0 3px; box-sizing: border-box; border-bottom: 1px solid #d4d4d4; margin-bottom: 2px; flex: none; }
    .thumb { width: 64px; height: 64px; border: 1px solid #c4c4c4; background: #f0f0f0; }
    .typetext { padding-top: 18px; line-height: 16px; color: #333; }
    .pick { height: 25px; display: flex; align-items: center; flex: none; }
    .select { width: 113px; height: 23px; box-sizing: border-box; border: 1px solid #ababab; background: #ececec; display: flex; align-items: center; justify-content: space-between; padding: 1px 4px 0 3px; color: #222; }
    .edit { display: flex; align-items: center; gap: 5px; margin-left: 6px; }
    .group { height: 20px; background: #dadada; display: flex; align-items: center; justify-content: space-between; padding: 0 7px 0 2px; flex: none; margin-top: 1px; }
    .grid { background: #fff; flex: 1; }
    .row { display: grid; grid-template-columns: 92px 91px 13px; height: 20px; box-sizing: border-box; border-bottom: 1px dotted #555; }
    .row > div { border-right: 1px dotted #555; line-height: 19px; }
    .row .k { padding-left: 10px; }
    .row .v { padding-left: 2px; }
    .row .active { border: 1.500px solid #111; box-sizing: border-box; line-height: 16px; height: 19px; margin-left: 1px; }
    .check { width: 11px; height: 11px; border: 1px solid #444; margin: 3px 0 0 2px; display: block; }
    .foot { height: 26px; display: flex; align-items: center; justify-content: space-between; padding: 0 2px; flex: none; }
    .foot a { color: #1463c8; text-decoration: underline; }
    .apply { width: 73px; height: 19px; box-sizing: border-box; border: 1px solid #b0b0b0; background: #cacaca; color: #8a8a8a; text-align: center; line-height: 17px; }

    .browser { height: 364px; background: #fff; display: flex; flex-direction: column; }
    .browser .head { background: #eeeeee; height: 19px; }
    .tree { position: relative; flex: 1; }
    .lines { position: absolute; left: 0; top: 0; }
    .node { height: 20px; display: flex; align-items: center; position: relative; white-space: pre; }
    .n0 { padding-left: 4px; }
    .n1 { padding-left: 24px; }
    .exp { width: 9px; height: 9px; box-sizing: border-box; border: 1px solid #888; background: #fff; position: relative; flex: none; }
    .exp::before { content: ""; position: absolute; left: 1px; right: 1px; top: 3px; height: 1px; background: #333; }
    .exp.plus::after { content: ""; position: absolute; top: 1px; bottom: 1px; left: 3px; width: 1px; background: #333; }
    .slot { width: 9px; flex: none; }
    .n0 .ico { margin: 0 6px 0 7px; }
    .n1 .lbl { margin-left: 13px; }
    .lbl.sel { background: #e0e0e0; height: 20px; line-height: 20px; padding: 0 3px; margin-left: -3px; }
  `;

  private closeX() {
    return html`<svg class="x" width="10" height="10" viewBox="0 0 10 10"><path d="M0.500 0.500l9 9M9.500 0.500l-9 9" stroke="#222" stroke-width="2"/></svg>`;
  }

  private node(lv: number, exp: string, ic: string, label: string, sel = false) {
    return html`<div class="node n${lv}">
      ${exp ? html`<i class="exp ${exp}"></i>` : html`<i class="slot"></i>`}
      ${ic ? icon(ic) : ''}
      <span class="lbl ${sel ? 'sel' : ''}">${label}</span>
    </div>`;
  }

  render() {
    return html`
      <div class="props">
        <div class="head"><span>属性</span>${this.closeX()}</div>
        <div class="type"><div class="thumb"></div><div class="typetext">文字<br />6mm</div></div>
        <div class="pick">
          <div class="select"><span>文字注释 (1)</span>
            <svg width="9" height="6" viewBox="0 0 9 6"><path d="M0.500 0.500l4 4 4-4" fill="none" stroke="#777"/></svg>
          </div>
          <div class="edit">
            <svg class="ico" width="16" height="16" viewBox="0 0 16 16"><rect x="0.500" y="1.500" width="6" height="6" fill="#fff" stroke="#444"/><rect x="0.500" y="9.500" width="6" height="6" fill="#fff" stroke="#444"/><rect x="8.500" y="0.500" width="7" height="7" fill="#fff" stroke="#444"/><rect x="8.500" y="8.500" width="7" height="7" fill="#dbe6f2" stroke="#444"/></svg>
            <span>编辑类型</span>
          </div>
        </div>
        <div class="group"><span>图形</span>
          <svg width="7" height="9" viewBox="0 0 7 9"><path d="M0.500 4l3-3 3 3M0.500 8l3-3 3 3" fill="none" stroke="#222" stroke-width="1.200"/></svg>
        </div>
        <div class="grid">
          <div class="row"><div class="k">水平对齐</div><div class="v active">左</div><div></div></div>
          <div class="row"><div class="k">垂直对齐</div><div class="v">顶</div><div></div></div>
          <div class="row"><div class="k">保持可读</div><div class="v"><svg class="check" viewBox="0 0 11 11"><path d="M2 5l3 3 5-6" fill="none" stroke="#444"/></svg></div><div></div></div>
        </div>
        <div class="foot"><a>属性帮助</a><div class="apply">应用</div></div>
      </div>
      <div class="browser">
        <div class="head"><span>项目浏览器 - 族1</span>${this.closeX()}</div>
        <div class="tree">
          <svg class="lines" width="60" height="180" viewBox="0 0 60 180">
            <path d="M8.500 14V170H20M8.500 110H20M8.500 130H20M8.500 150H20M28.500 20V90M28.500 30H45M28.500 50H45M28.500 70H45M28.500 90H45" fill="none" stroke="#888" stroke-dasharray="1 1"/>
          </svg>
          ${this.node(0, 'minus', 'views', '视图 (全部)', true)}
          ${this.node(1, 'plus', '', '楼层平面')}
          ${this.node(1, 'plus', '', '天花板平面')}
          ${this.node(1, 'plus', '', '三维视图')}
          ${this.node(1, 'plus', '', '立面 (立面 1)')}
          ${this.node(0, '', 'sheet', '图纸 (全部)')}
          ${this.node(0, 'plus', 'family', '族')}
          ${this.node(0, 'plus', 'group', '组')}
          ${this.node(0, '', 'link', 'Revit 链接')}
        </div>
      </div>
    `;
  }
}

// the drawing itself, in page coordinates through the viewBox
@customElement('revit-canvas')
export class RevitCanvas extends LitElement {
  static styles = css`
    :host { display: block; position: relative; width: 1318px; height: 697px; background: #fff; overflow: hidden; flex: none; }
    svg { display: block; }
    .txt { font-family: "Liberation Sans", "Noto Sans CJK SC", sans-serif; }
    .spaced { word-spacing: 3.500px; }
    .nav { position: absolute; left: 1282px; top: 3px; width: 36px; height: 117px; box-sizing: border-box; border: 2px solid #c0c0c0; border-radius: 5px; background: #f3f3f3; display: flex; flex-direction: column; align-items: center; }
    .nav hr { width: 26px; border: 0; border-top: 1px solid #c8c8c8; margin: 5px 0 7px; }
    .nav .tri { width: 0; height: 0; border: 3px solid transparent; border-top: 3px solid #999; border-bottom: 0; margin-top: 9px; }
    .nav .tri.near { margin-top: 3px; }
    .navtop { display: block; margin: 1px 0 0 20px; }
    .wheel { margin-top: 7px; margin-left: 4px; }
    .navbot { display: block; margin: auto 0 1px 20px; }
  `;

  render() {
    const green = '#0c7a0c';
    const hl: number[] = [];
    for (let c = 720; c > 340; c -= 37) hl.push(c);
    const hr: number[] = [];
    for (let c = 1004; c < 1400; c += 37) hr.push(c);
    const dash: number[] = [];
    for (let k = -9; k <= 14; k++) dash.push(749 + k * 42.67);
    const sideV = [[361, 376], [398, 418], [440, 461], [483, 503], [525, 545], [568, 588], [610, 630], [653, 673], [695, 715], [737, 752]];
    const midV = [[360, 381], [403, 425], [446, 467], [488, 509], [531, 551], [573, 595], [616, 637], [658, 681]];
    const diag = (c: number) => svg`<path d="M${c - 32} 485L${c + 32} 549M${c + 32} 485L${c - 32} 549"/>`;
    const tick = (x: number, y: number) => svg`<path d="M${x - 5.500} ${y + 5}L${x + 6} ${y - 5}" stroke="#000" stroke-width="2"/>`;
    return html`
      <svg width="1318" height="697" viewBox="206 198 1318 697">
        <defs>
          <clipPath id="wl"><rect x="352" y="492" width="384" height="52"/></clipPath>
          <clipPath id="wr"><rect x="994" y="492" width="385" height="52"/></clipPath>
        </defs>
        <g stroke="#848484" stroke-width="1.600" fill="none">
          <g clip-path="url(#wl)">${hl.map(diag)}</g>
          <g clip-path="url(#wr)">${hr.map(diag)}</g>
        </g>

        <path d="M316 517.500h29M1388 517.500h28" stroke=${green}/>
        <g stroke="#000" stroke-width="3" fill="none">
          <path d="M352 492.500H1313M1347 492.500H1380M352 544H1313M1347 544H1380M352.500 491V545.500M1379 491V545.500M736.500 491V545.500M993.500 491V545.500"/>
        </g>
        <g stroke=${green} fill="none">
          ${dash.map((x) => svg`<path d="M${x} 517.500h21M${x} 492.500h21M${x} 544h21"/>`)}
          ${sideV.map(([a, b]) => svg`<path d="M736.500 ${a}V${b}M993.500 ${a}V${b}"/>`)}
          ${midV.map(([a, b]) => svg`<path d="M865.500 ${a}V${b}"/>`)}
        </g>

        <path d="M736.500 300V349M865.500 300V349M993.500 300V349M736.500 763V827M993.500 763V827M736 309.500H994M736 817.500H994" stroke="#000" fill="none"/>
        ${tick(737, 309)}${tick(866, 309)}${tick(994, 309)}${tick(737, 817)}${tick(994, 817)}

        <path d="M702 486.500H1013.500V491M718.500 486V491" stroke="#000" stroke-width="1.800" fill="none"/>
        <path d="M702 480L713 495M702 486L712 497" stroke="#000" stroke-width="1.800"/>
        <path d="M1350 488L1360 498M1350 538L1360 548" stroke="#000" stroke-width="1.800"/>

        <text class="txt" x="780" y="293" font-size="27.500">EQ</text>
        <text class="txt" x="908" y="293" font-size="27.500">EQ</text>
        <text class="txt spaced" x="789" y="800" font-size="27">宽度 = 1000</text>
        <text class="txt spaced" transform="translate(674 517) rotate(-90)" font-size="28.500">贴面投影 <tspan font-weight="700">= 25</tspan></text>
        <text class="txt" transform="translate(1339 492.500) rotate(-90)" text-anchor="middle" font-size="27.500" font-weight="700">0</text>
        <text class="txt" transform="translate(1339 543.500) rotate(-90)" text-anchor="middle" font-size="27.500" font-weight="700">0</text>
        <text class="txt" x="348" y="754" font-size="44">内部</text>

        <rect x="346.500" y="285.500" width="267" height="94" fill="none" stroke="#0b3fb4" stroke-width="1.200"/>
        <text class="txt" x="355" y="351" font-size="44" fill="#0a3fc0">外部</text>
        <circle cx="346.500" cy="332.500" r="4" fill="#7fb2f0" stroke="#777" stroke-width="1.200"/>
        <circle cx="613.500" cy="332.500" r="4" fill="#7fb2f0" stroke="#777" stroke-width="1.200"/>
        <path d="M338 285.500h17M346.500 277v17" stroke="#0b3fb4" stroke-width="1.200"/>
        <path d="M339 283.500v4l-3-2zM354 283.500v4l3-2zM344.500 278h4l-2-3zM344.500 293h4l-2 3z" fill="#0b3fb4"/>
        <circle cx="613.500" cy="285.500" r="5" fill="#fff" fill-opacity="0.300" stroke="#0b3fb4" stroke-dasharray="3 1"/>
        <path d="M611 280h4v-2l3 2-3 2z" fill="#0b3fb4"/>

        <path d="M890 369V385L887 381M895 386V370L898 374M890 369L893 372M895 386L892 383" fill="none" stroke="#1428e0" stroke-width="1.100"/>
      </svg>
      <div class="nav">
        <svg class="navtop" width="10" height="10" viewBox="0 0 10 10"><circle cx="5" cy="5" r="4.500" fill="#bbb"/><path d="M3 3l4 4M7 3l-4 4" stroke="#f3f3f3"/></svg>
        <svg class="wheel" width="26" height="24" viewBox="0 0 26 24">
          <path d="M4 2h13a4 4 0 0 1 4 4v6a8 8 0 0 1-8 8H8a7 7 0 0 1-7-7V6a4 4 0 0 1 3-4z" fill="none" stroke="#bbb" stroke-width="1.300"/>
          <circle cx="10" cy="10" r="4.500" fill="none" stroke="#aaa"/>
          <text x="12" y="21" font-family="Liberation Sans" font-size="9.500" font-weight="700" fill="#5a8cc8">2D</text>
        </svg>
        <i class="tri near"></i>
        <hr />
        <svg width="18" height="18" viewBox="0 0 18 18">
          <rect x="1" y="1" width="10" height="10" fill="#bcd4a0" stroke="#8aa878"/>
          <circle cx="12" cy="12" r="3.500" fill="#eee" stroke="#888"/><path d="M14.500 14.500L17 17" stroke="#777" stroke-width="1.500"/>
        </svg>
        <i class="tri"></i>
        <svg class="navbot" width="10" height="10" viewBox="0 0 10 10"><circle cx="5" cy="5" r="4.500" fill="#bbb"/><path d="M2.500 5h5" stroke="#f3f3f3" stroke-width="1.400"/></svg>
      </div>
    `;
  }
}

@customElement('app-root')
export class AppRoot extends LitElement {
  static styles = css`
    :host { display: flex; flex-direction: column; width: 100%; height: 941px; overflow: hidden; background: #cbcbcb; font: 12px/16px "Noto Sans", "Noto Sans CJK SC", sans-serif; color: #222; }
    .ico { display: block; flex: none; }
    .workspace { display: flex; height: 736px; margin-top: 2px; flex: none; }
    .view { width: 1334px; margin-left: 4px; display: flex; flex-direction: column; flex: none; }
    .strip { height: 20px; display: flex; align-items: stretch; justify-content: space-between; flex: none; }
    .vtab { width: 126px; box-sizing: border-box; background: #fff; display: flex; align-items: center; padding: 0 5px 0 6px; gap: 6px; color: #444; }
    .vtab span { flex: 1; }
    .more { display: flex; flex-direction: column; align-items: center; gap: 1px; padding: 6px 3px 0 0; }
    .more b { display: block; width: 9px; height: 2px; background: #333; }
    .more i { display: block; width: 0; height: 0; border: 4px solid transparent; border-top: 4px solid #333; border-bottom: 0; }
    .stage { display: flex; flex: none; }
    .vscroll { width: 16px; height: 697px; background: #eeeeee; display: flex; flex-direction: column; align-items: center; justify-content: space-between; padding: 7px 0 5px; box-sizing: border-box; position: relative; }
    .thumbv { position: absolute; left: 0; top: 341px; width: 16px; height: 17px; background: #c9c9c9; }
    .hbar { height: 17px; background: #eeeeee; display: flex; align-items: center; position: relative; flex: none; }
    .scale { margin-left: 25px; width: 54px; white-space: pre; color: #222; }
    .vicons { display: flex; gap: 5px; }
    .hbar .left { margin-left: 12px; }
    .thumbh { position: absolute; left: 763px; top: 0; width: 17px; height: 17px; background: #c9c9c9; }
    .hbar .right { position: absolute; left: 1308px; top: 4px; }
    .grip { position: absolute; right: 1px; bottom: 1px; }
    .status { height: 27px; display: flex; align-items: center; flex: none; }
    .msg { margin-left: 5px; white-space: nowrap; color: #222; flex: none; word-spacing: 1px; }
    .stat { margin-left: auto; display: flex; align-items: center; gap: 10px; padding-right: 96px; color: #444; }
    .filter { display: flex; align-items: center; gap: 1px; margin-left: -3px; }
  `;

  render() {
    return html`
      <revit-ribbon></revit-ribbon>
      <div class="workspace">
        <revit-side></revit-side>
        <div class="view">
          <div class="strip">
            <div class="vtab">${icon('tabView', 15)}<span>参照标高</span>
              <svg width="10" height="10" viewBox="0 0 10 10"><path d="M0.500 0.500l9 9M9.500 0.500l-9 9" stroke="#222" stroke-width="2"/></svg>
            </div>
            <div class="more"><b></b><i></i></div>
          </div>
          <div class="stage">
            <revit-canvas></revit-canvas>
            <div class="vscroll">
              <svg width="10" height="6" viewBox="0 0 10 6"><path d="M1 5l4-4 4 4" fill="none" stroke="#444" stroke-width="1.800"/></svg>
              <i class="thumbv"></i>
              <svg width="10" height="6" viewBox="0 0 10 6"><path d="M1 1l4 4 4-4" fill="none" stroke="#444" stroke-width="1.800"/></svg>
            </div>
          </div>
          <div class="hbar">
            <span class="scale">1  :  20</span>
            <div class="vicons">
              ${icon('vFrame')}${icon('vCube')}${icon('vHideX')}${icon('vBulb')}${icon('vEye')}${icon('vCrop')}${icon('vTemp')}
            </div>
            <svg class="left" width="6" height="10" viewBox="0 0 6 10"><path d="M5 1L1 5l4 4" fill="none" stroke="#444" stroke-width="1.800"/></svg>
            <i class="thumbh"></i>
            <svg class="right" width="6" height="10" viewBox="0 0 6 10"><path d="M1 1l4 4-4 4" fill="none" stroke="#444" stroke-width="1.800"/></svg>
            <svg class="grip" width="9" height="9" viewBox="0 0 9 9"><path d="M7 1h2v2H7zM4 4h2v2H4zM7 4h2v2H7zM1 7h2v2H1zM4 7h2v2H4zM7 7h2v2H7z" fill="#bbb"/></svg>
          </div>
        </div>
      </div>
      <div class="status">
        <div class="msg">单击可进行选择; 按 Tab 键并单击可选择其他项目; 按 Ctrl 键并单击可将新项目添加到选择集; 按 Shif</div>
        <div class="stat">
          ${icon('sLink')}${icon('sUnder')}${icon('sPin')}${icon('sFace')}${icon('sDrag')}${icon('sCog')}
          <span class="filter">${icon('sFilter')}:1</span>
        </div>
      </div>
    `;
  }
}
